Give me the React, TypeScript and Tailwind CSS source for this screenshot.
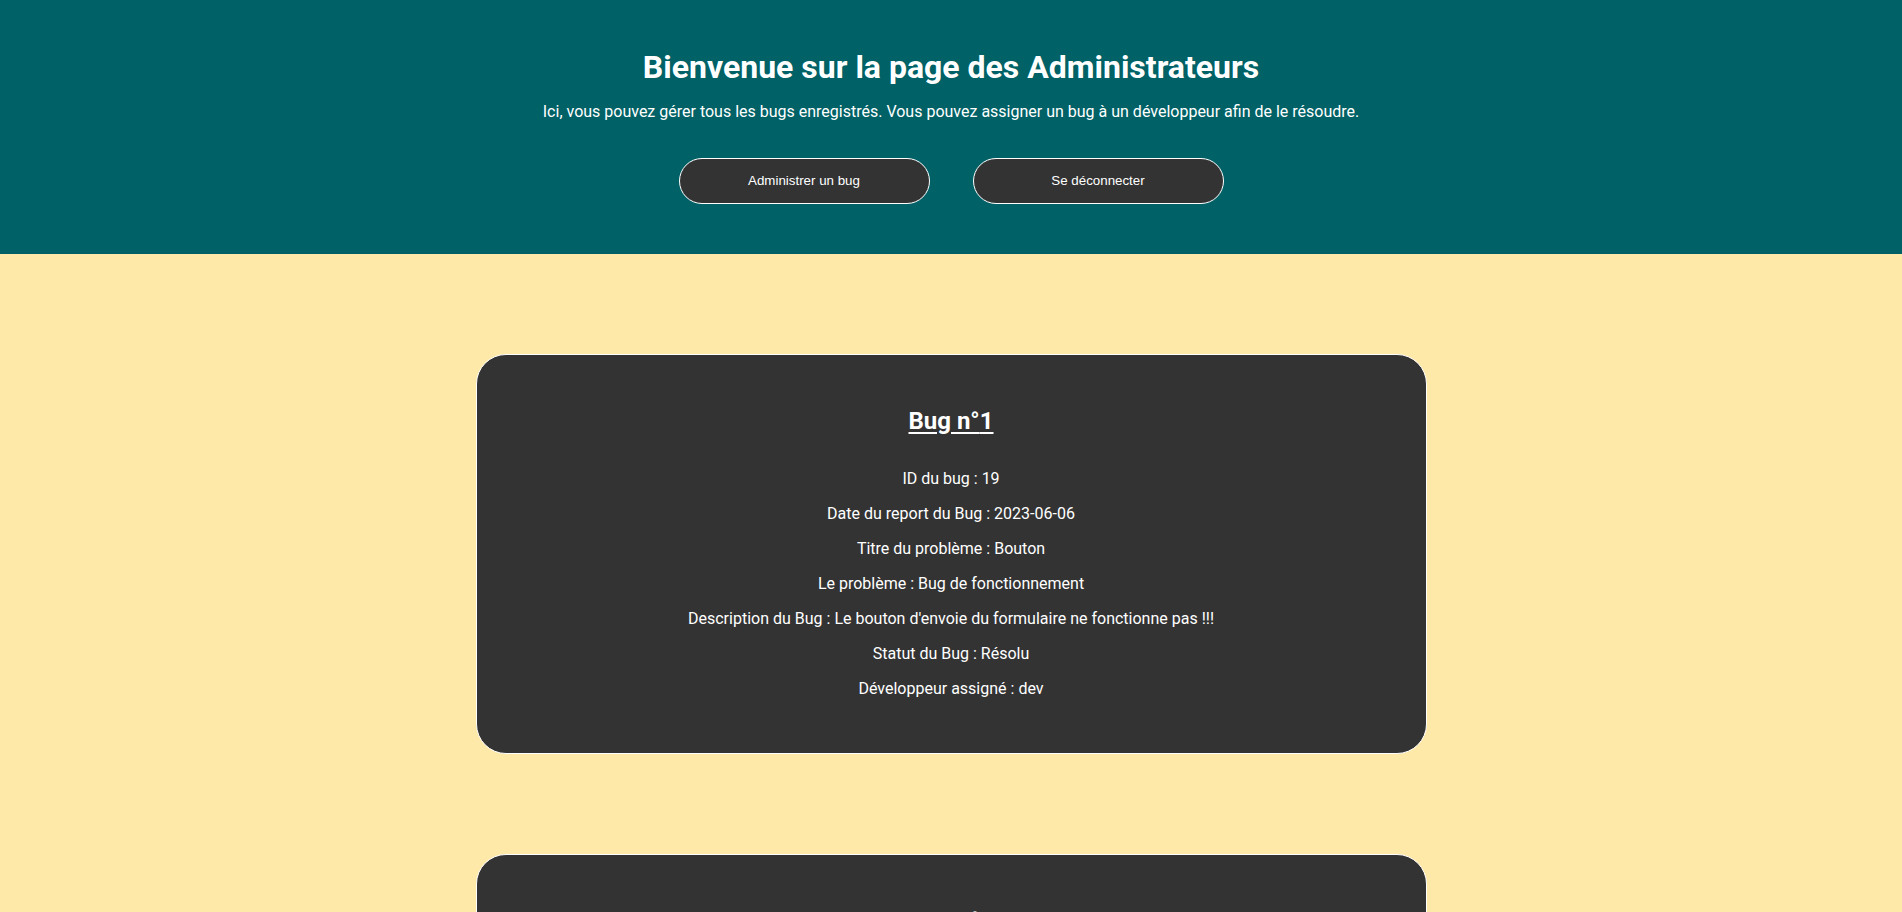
interface Bug {
  id: number;
  date: string;
  titre: string;
  probleme: string;
  description: string;
  statut: string;
  dev: string;
}

const bugs: Bug[] = [
  {
    id: 19,
    date: "2023-06-06",
    titre: "Bouton",
    probleme: "Bug de fonctionnement",
    description: "Le bouton d'envoie du formulaire ne fonctionne pas !!!",
    statut: "Résolu",
    dev: "dev",
  },
  {
    id: 20,
    date: "2023-06-07",
    titre: "Page",
    probleme: "Bug d'affichage",
    description: "La page ne s'affiche pas correctement",
    statut: "En cours",
    dev: "dev",
  },
];

const BugCard = ({ bug, index }: { bug: Bug; index: number }) => {
  return (
    <div className="mx-auto mb-[100px] w-[951px] rounded-[30px] border border-white bg-[#333333] pt-[52px] pb-[55px] text-center text-white">
      <h2 className="text-[24px] leading-[28px] font-bold underline underline-offset-[3px]">
        Bug n°{index + 1}
      </h2>
      <div className="mt-[34px] flex flex-col gap-[16px] text-[16px] leading-[19px]">
        <p>ID du bug : {bug.id}</p>
        <p>Date du report du Bug : {bug.date}</p>
        <p>Titre du problème : {bug.titre}</p>
        <p>Le problème : {bug.probleme}</p>
        <p>Description du Bug : {bug.description}</p>
        <p>Statut du Bug : {bug.statut}</p>
        <p>Développeur assigné : {bug.dev}</p>
      </div>
    </div>
  );
};

const App = () => {
  return (
    <div className="min-h-screen bg-[#ffe9a8] font-['Roboto',sans-serif]">
      {/* Header */}
      <header className="flex h-[254px] flex-col items-center bg-[#006166] pt-[49px] text-white">
        <h1 className="text-[32px] leading-[37px] font-bold">
          Bienvenue sur la page des Administrateurs
        </h1>
        <p className="mt-[16px] text-[16px] leading-[19px]">
          Ici, vous pouvez gérer tous les bugs enregistrés. Vous pouvez assigner un bug à un développeur afin de le résoudre.
        </p>
        <div className="mt-[37px] flex gap-[43px]">
          <button className="h-[46px] w-[251px] rounded-full border border-white bg-[#333333] font-['Liberation_Sans',Arial,sans-serif] text-[13.33px] text-white">
            Administrer un bug
          </button>
          <button className="h-[46px] w-[251px] rounded-full border border-white bg-[#333333] font-['Liberation_Sans',Arial,sans-serif] text-[13.33px] text-white">
            Se déconnecter
          </button>
        </div>
      </header>

      {/* Liste des bugs */}
      <main className="pt-[100px]">
        {bugs.map((bug, i) => (
          <BugCard key={bug.id} bug={bug} index={i} />
        ))}
      </main>
    </div>
  );
};

export default App;
